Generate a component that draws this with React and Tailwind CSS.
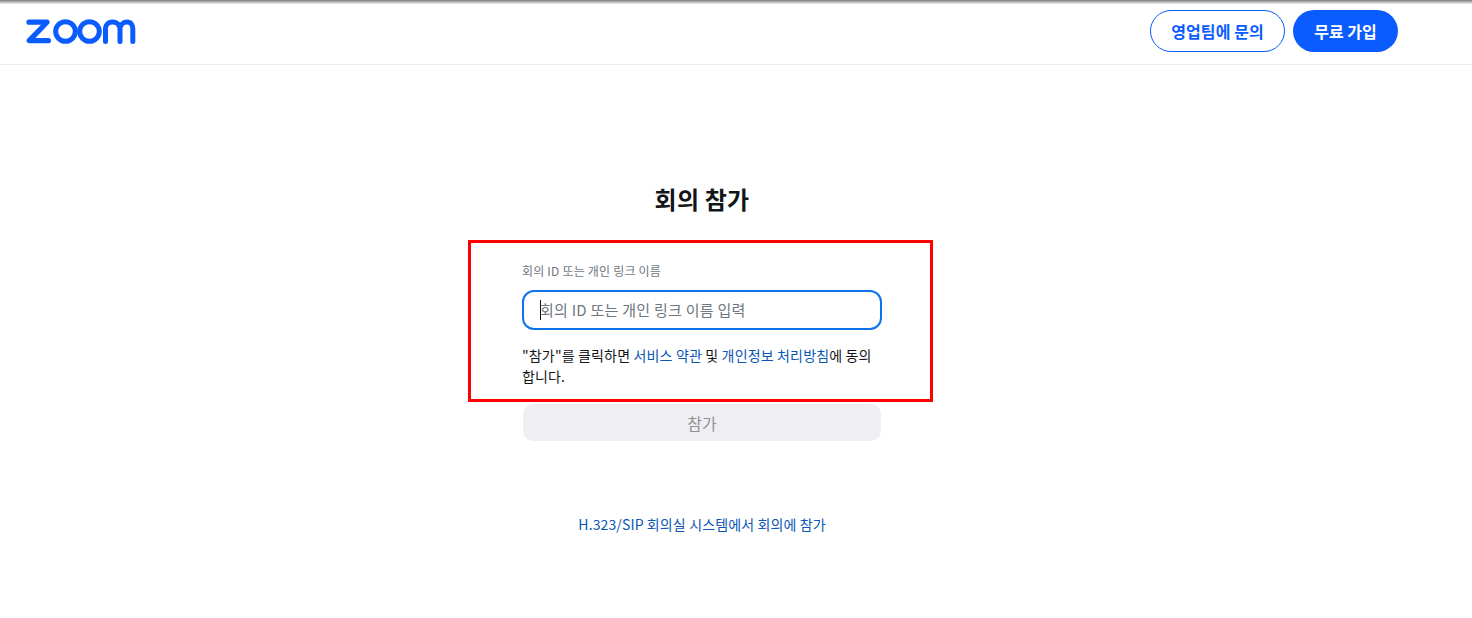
export default function App() {
  const font = { fontFamily: '"Noto Sans CJK KR", "Noto Sans", sans-serif' };
  return (
    <div style={font} className="h-[618px] w-[1472px] overflow-hidden bg-white">
      <div className="h-[4px] bg-gradient-to-b from-[#7d7d7d] to-[#f4f4f4]" />
      <header className="flex h-[61px] items-start justify-between border-b border-[#ededf0] pl-[26px] pr-[74px]">
        <svg width="110" height="25" viewBox="0 0 110 25" className="mt-[15px]" fill="none">
          <path d="M3 3.2H21L3.2 21.6H22.5" stroke="#0b5cff" strokeWidth="5.2" strokeLinejoin="round" strokeLinecap="round" />
          <circle cx="39.5" cy="12.5" r="9.8" stroke="#0b5cff" strokeWidth="5" />
          <circle cx="63.5" cy="12.5" r="9.8" stroke="#0b5cff" strokeWidth="5" />
          <path d="M79.5 22.5V9.5C79.5 5.5 82.5 3 86.5 3C90.5 3 93.5 5.5 94 9.5V22.5M94 9.5C94.5 5.5 97.5 3 101 3C105 3 106.8 6 106.8 9.5V22.5" stroke="#0b5cff" strokeWidth="5" strokeLinecap="round" />
        </svg>
        <div className="mt-[6px] flex items-center gap-2">
          <button className="h-[42px] w-[135px] rounded-[21px] border border-[#0b5cff] bg-white text-[16px] font-bold tracking-[0.1px] text-[#0b5cff]">영업팀에 문의</button>
          <button className="h-[42px] w-[105px] rounded-[21px] bg-[#0b5cff] text-[16px] font-bold text-white">무료 가입</button>
        </div>
      </header>
      <main className="flex flex-col items-center pr-[71px]">
        <div className="flex w-[465px] flex-col items-center">
          <h1 className="ml-[3px] mt-[116px] text-[24px] font-bold leading-[36px] tracking-[0.2px] text-[#131619]">회의 참가</h1>
          <div className="mt-[23px] h-[162px] w-[465px] border-[3px] border-[#ff0000] pl-[51px] pr-[48px] pt-[19px]">
            <label className="block text-[12px] leading-[17px] tracking-[0.2px] text-[#6e7680]">회의 ID 또는 개인 링크 이름</label>
            <div className="relative mt-[11px] flex h-[40px] w-[360px] items-center rounded-[12px] border-2 border-[#0e72ed] pl-[16px] text-[15px] tracking-[0.25px] text-[#6e7680]">
              <span className="absolute left-[16px] top-[8px] h-[20px] w-px bg-[#131619]" />
              회의 ID 또는 개인 링크 이름 입력
            </div>
            <p className="mt-[15px] w-[360px] text-[14px] leading-[21px] tracking-[0.16px] text-[#131619]">
              "참가"를 클릭하면 <span className="text-[#0956b5]">서비스 약관</span> 및 <span className="text-[#0956b5]">개인정보 처리방침</span>에 동의합니다.
            </p>
          </div>
          <button className="ml-[3px] mt-[2px] h-[37px] w-[358px] rounded-[10px] bg-[#efeff3] text-[16px] text-[#8f9297]">참가</button>
          <a className="ml-[3px] mt-[73px] text-[14px] leading-[20px] tracking-[0.12px] text-[#0956b5]">H.323/SIP 회의실 시스템에서 회의에 참가</a>
        </div>
      </main>
    </div>
  );
}
